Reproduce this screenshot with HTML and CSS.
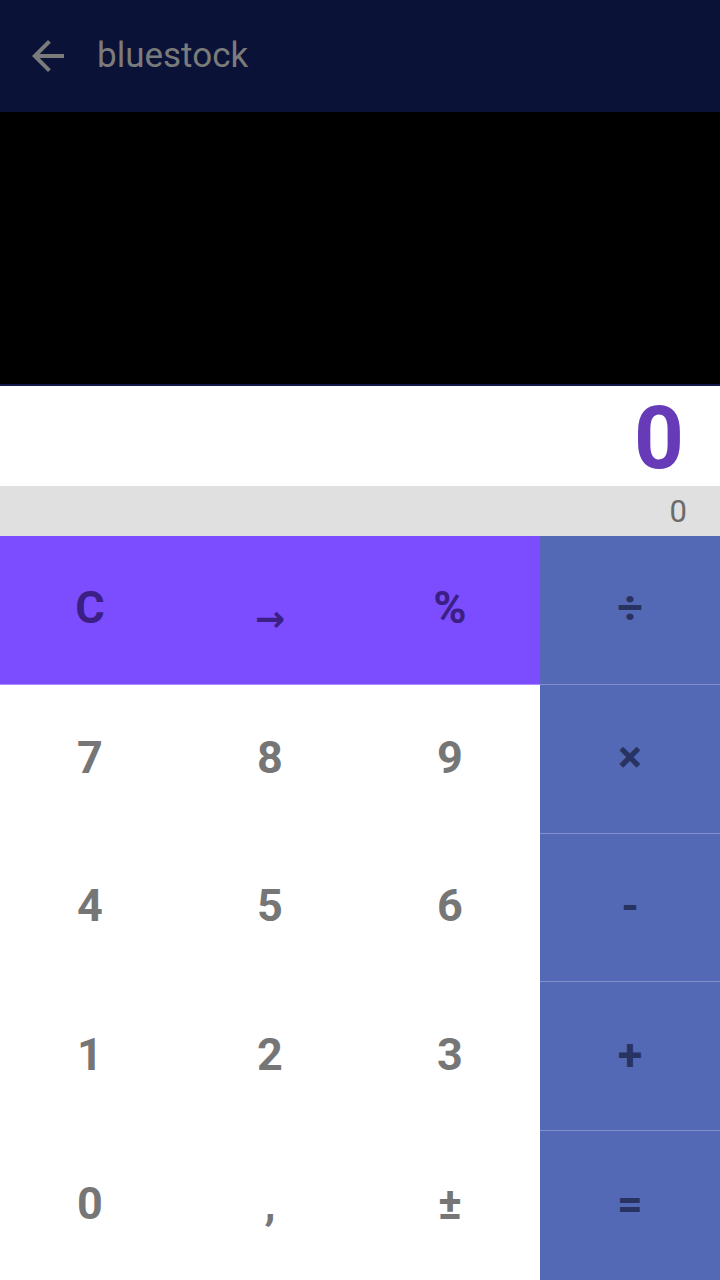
FILE: index.html
```html
<!DOCTYPE html>
<html>
<head>
<meta charset="utf-8">
<link rel="stylesheet" href="styles.css">
</head>
<body>
<div class="app">
  <header class="appbar">
    <svg class="back" width="48" height="48" viewBox="0 0 24 24"><path d="M20 11H7.83l5.59-5.59L12 4l-8 8 8 8 1.41-1.41L7.83 13H20v-2z" fill="#7b7b7b"/></svg>
    <span class="title">bluestock</span>
  </header>
  <div class="media"></div>
  <div class="display"><span class="result">0</span></div>
  <div class="expr"><span>0</span></div>
  <div class="keypad">
    <div class="key fn">C</div>
    <div class="key fn arrow">→</div>
    <div class="key fn">%</div>
    <div class="key op">÷</div>
    <div class="key num">7</div>
    <div class="key num">8</div>
    <div class="key num">9</div>
    <div class="key op">×</div>
    <div class="key num">4</div>
    <div class="key num">5</div>
    <div class="key num">6</div>
    <div class="key op">-</div>
    <div class="key num">1</div>
    <div class="key num">2</div>
    <div class="key num">3</div>
    <div class="key op">+</div>
    <div class="key num">0</div>
    <div class="key num">,</div>
    <div class="key num">±</div>
    <div class="key op last">=</div>
  </div>
</div>
</body>
</html>
```
FILE: styles.css
```css
* { box-sizing: border-box; }
html, body { margin: 0; padding: 0; }
body { font-family: Roboto, "Liberation Sans", sans-serif; background: #fff; }
.app { width: 720px; height: 1280px; display: flex; flex-direction: column; overflow: hidden; }
.appbar { height: 112px; background: #0a1238; display: flex; align-items: center; padding-left: 24px; }
.back { display: block; }
.title { color: #7b7b7b; font-size: 35px; margin-left: 25px; margin-top: -1px; }
.media { height: 274px; background: #000; border-bottom: 2px solid #15184a; }
.display { height: 100px; background: #fff; display: flex; justify-content: flex-end; align-items: center; padding-right: 36px; }
.result { color: #673ab7; font-size: 87px; font-weight: 700; line-height: 1; margin-top: 4px; }
.expr { height: 50px; background: #e0e0e0; display: flex; justify-content: flex-end; align-items: center; padding-right: 33px; }
.expr span { color: #6b6b6b; font-size: 31px; line-height: 1; margin-top: 0; }
.keypad { flex: 1; display: grid; grid-template-columns: repeat(4, 1fr); grid-template-rows: repeat(5, 1fr); }
.key { display: flex; align-items: center; justify-content: center; font-size: 45px; font-weight: 700; line-height: 1; padding-bottom: 4px; }
.fn { background: #7c4dff; color: #3b1f85; border-bottom: 1px solid #a98cff; }
.arrow { font-family: "DejaVu Sans", sans-serif; font-size: 36px; font-weight: 700; padding-top: 18px; padding-bottom: 0; }
.op { background: #5469b5; color: #283362; border-bottom: 1px solid #8291cd; }
.op.last { border-bottom: none; }
.num { color: #767676; }
```
